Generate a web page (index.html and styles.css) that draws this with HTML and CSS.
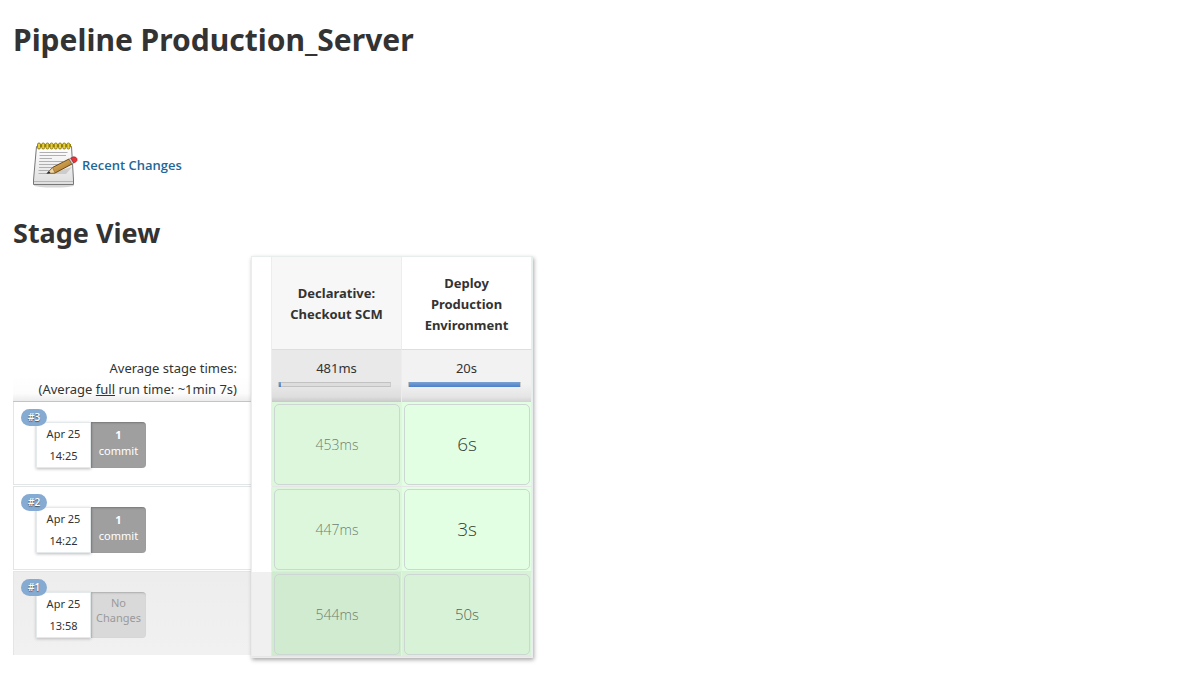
FILE: index.html
```html
<!DOCTYPE html>
<html lang="en">
<head>
<meta charset="utf-8">
<title>Pipeline Production_Server</title>
<link rel="stylesheet" href="styles.css">
</head>
<body>
<main class="page">
  <h1 class="page-title">Pipeline Production_Server</h1>
  <a class="recent" href="#changes">
    <svg class="notepad" viewBox="0 0 48 48" aria-hidden="true">
      <defs>
        <linearGradient id="paper" x1="0" y1="0" x2="0" y2="1"><stop offset="0" stop-color="#ffffff"/><stop offset="1" stop-color="#dedede"/></linearGradient>
        <linearGradient id="wood" x1="0" y1="0" x2="1" y2="1"><stop offset="0" stop-color="#f0c878"/><stop offset="1" stop-color="#a06a1c"/></linearGradient>
      </defs>
      <ellipse cx="22" cy="44.500" rx="20" ry="2" fill="#bbb" opacity=".6"/>
      <path d="M4.500 5.500H39.500L41.500 39V43.500H1.500V39Z" fill="url(#paper)" stroke="#777" stroke-linejoin="round"/>
      <path d="M2 40.500H41" stroke="#b5b5b5"/>
      <path d="M7.500 11.500H35.500M7.500 14.500H34M7.500 17.500H20M7 20.500H31M7 23.500H27M7 26.500H22M6.500 29.500H17M6.500 32.500H15" stroke="#b0b0b0"/>
      <path d="M5.500 4.500H39" stroke="#9a8510" stroke-width="3"/>
      <g fill="#e5cf3a" stroke="#8b760c" stroke-width=".9">
        <rect x="5.500" y="2" width="3" height="6" rx="1.500"/><rect x="9.700" y="2" width="3" height="6" rx="1.500"/><rect x="13.900" y="2" width="3" height="6" rx="1.500"/><rect x="18.100" y="2" width="3" height="6" rx="1.500"/><rect x="22.300" y="2" width="3" height="6" rx="1.500"/><rect x="26.500" y="2" width="3" height="6" rx="1.500"/><rect x="30.700" y="2" width="3" height="6" rx="1.500"/><rect x="34.900" y="2" width="3" height="6" rx="1.500"/>
      </g>
      <path d="M15 33L34 33L40 26Z" fill="#777" opacity=".25"/>
      <path d="M15 32.500L20.500 26.500L37 18L40 23L23 32Z" fill="url(#wood)" stroke="#70480d" stroke-linejoin="round"/>
      <path d="M15 32.500L20.500 26.500L23 32Z" fill="#efd6a4" stroke="#8a6a36" stroke-width=".7"/>
      <path d="M15 32.500L17 30.200L18.500 32Z" fill="#222"/>
      <path d="M37 18L38.800 17L41.800 22L40 23Z" fill="#ccc" stroke="#777" stroke-width=".5"/>
      <path d="M38.800 17L41.500 15.800Q44 15.500 45 17.800Q45.500 19.800 44 20.800L41.800 22Z" fill="#e8343a" stroke="#a41c22" stroke-width=".7"/>
    </svg>
    <span>Recent Changes</span>
  </a>
  <h2 class="section-title">Stage View</h2>
  <div class="stage-view">
    <section class="runs" aria-label="Runs">
      <div class="averages">Average stage times:<br>(Average <u>full</u> run time: ~1min 7s)</div>
      <article class="run run-first">
        <span class="badge">#3</span>
        <div class="card"><div class="when"><span>Apr 25</span><span>14:25</span></div><div class="commits"><b>1</b><span>commit</span></div></div>
      </article>
      <article class="run">
        <span class="badge">#2</span>
        <div class="card"><div class="when"><span>Apr 25</span><span>14:22</span></div><div class="commits"><b>1</b><span>commit</span></div></div>
      </article>
      <article class="run run-old">
        <span class="badge">#1</span>
        <div class="card"><div class="when"><span>Apr 25</span><span>13:58</span></div><div class="commits none"><span>No</span><span>Changes</span></div></div>
      </article>
    </section>
    <table class="stages">
      <thead>
        <tr class="names"><td class="gutter"></td><th scope="col">Declarative: Checkout SCM</th><th scope="col">Deploy Production Environment</th></tr>
        <tr class="totals"><td class="gutter"></td>
          <td>481ms<div class="track"><div class="fill" style="width:2%"></div></div></td>
          <td>20s<div class="track"><div class="fill" style="width:100%"></div></div></td></tr>
      </thead>
      <tbody>
        <tr><td class="gutter"></td><td><div class="result short">453ms</div></td><td><div class="result large">6s</div></td></tr>
        <tr><td class="gutter"></td><td><div class="result short">447ms</div></td><td><div class="result large">3s</div></td></tr>
        <tr class="old"><td class="gutter"></td><td><div class="result short">544ms</div></td><td><div class="result">50s</div></td></tr>
      </tbody>
    </table>
  </div>
</main>
</body>
</html>
```
FILE: styles.css
```css
* { box-sizing: border-box; }
body { margin: 0; background: #fff; color: #333; font: 14px/21px "Noto Sans", "Open Sans", sans-serif; }
.page { padding: 20px 13px; }
.page-title { margin: 0; font-size: 30px; line-height: 40px; font-weight: 700; }
.recent { display: flex; width: fit-content; align-items: center; gap: 2px; margin: 81px 0 0 19px; color: #1f6797; font-size: 13px; font-weight: 600; font-family: "Open Sans", sans-serif; text-decoration: none; }
.notepad { width: 48px; height: 48px; }
.section-title { margin: 24px 0 3px; font-size: 27px; line-height: 40px; font-weight: 700; }
.stage-view { display: flex; align-items: flex-end; }
.runs { width: 238px; padding-bottom: 3px; }
.averages { height: 52px; padding: 8px 14px 0 0; border-bottom: 1px solid #c4c4c4; text-align: right; font-size: 13px; background: linear-gradient(#fff 50%, #fcfcfc 85%, #ececec); }
.run { height: 84px; margin-bottom: 1px; padding: 7px 0 0 7px; border: 1px solid #e3e6e6; border-right: 0; }
.run-first { height: 83px; border-top: 0; }
.run-old { margin-bottom: 0; border-bottom: 0; background: linear-gradient(#ededed, #f1f1f1); }
.badge { position: relative; z-index: 1; display: block; width: fit-content; height: 17px; padding: 0 7px; border-radius: 9px; background: #86abd2; color: #fff; font: 600 10px/17px "Open Sans", sans-serif; text-shadow: 0 1px 1px #456; }
.card { display: flex; width: 110px; height: 46px; margin: -4px 0 0 15px; font-size: 11px; text-align: center; }
.when { display: flex; width: 50%; flex-direction: column; background: #fff; border: 1px solid #e4eaeb; box-shadow: 0 1px 3px #bbb; line-height: 22px; }
.commits { display: flex; width: 50%; flex-direction: column; padding-top: 5px; border-radius: 0 4px 4px 0; background: #9f9f9f; color: #fff; line-height: 16px; box-shadow: inset 1px 1px 2px #777; }
.none { padding-top: 3px; background: #d9d9d9; color: #999; line-height: 15px; box-shadow: inset 1px 1px 2px #aaa; }
.stages { width: 282px; table-layout: fixed; border: 1px solid #e8eeee; border-collapse: separate; border-spacing: 0; box-shadow: 1px 2px 4px #aaa; text-align: center; }
.stages td, .stages th { padding: 0; border-right: 1px solid #e9eeee; }
.stages .gutter { width: 20px; background: #fff; }
.names th { height: 93px; padding: 2px 14px 0; border-bottom: 1px solid #dedede; font-size: 13px; }
.names th:nth-child(2) { background: #f7f7f7; }
.totals td { height: 52px; padding: 8px 6px 0; vertical-align: top; font-size: 13px; background: linear-gradient(#f2f2f2 65%, #e5e5e5 90%, #d2d2d2); }
.totals td:nth-child(2) { background: linear-gradient(#e9e9e9 65%, #dedede 90%, #c8c8c8); }
.track { height: 5px; margin: 3px 4px 0 0; background: #ddd; border: 1px solid #c2c2c2; border-right-color: #ccc; }
.fill { height: 5px; margin-top: -1px; background: linear-gradient(#79a2d3, #4d80ca); }
.stages tbody td { height: 85px; padding: 2px 1px 1px 2px; border-bottom: 1px solid #e6e6e6; background: #e3ffe3; }
.stages tbody td:nth-child(2) { background: #ddf7dd; }
.stages tbody .gutter { border-bottom-color: #fff; background: #fff; }
.stages .old td:nth-child(2) { background: #d1ebd1; }
.stages .old td:nth-child(3) { background: #d8f2d8; }
.stages .old .gutter { background: #f0f0f0; border-color: #e6e6e6; }
.result { display: grid; place-items: center; height: 81px; border: 1px solid #ccd6d2; border-radius: 5px; font: 300 15px/21px "Open Sans", sans-serif; color: #556355; }
.short { font-size: 14px; color: #6d7f6d; }
.large { font-size: 19px; color: #333d33; }
```
